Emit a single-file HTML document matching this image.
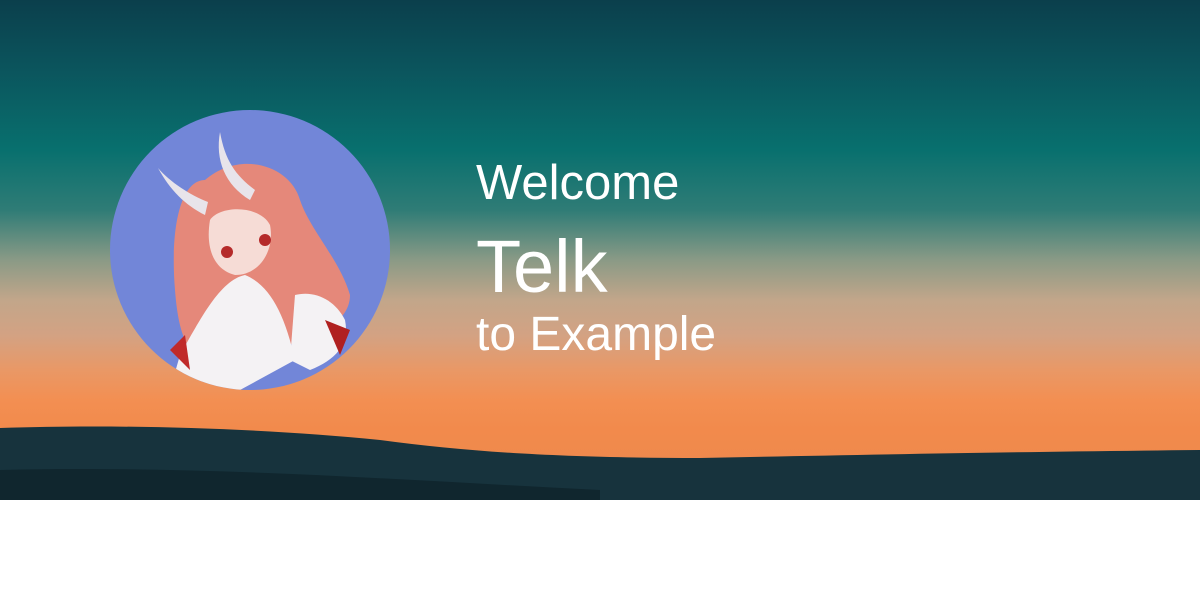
<!DOCTYPE html>
<html><head><meta charset="utf-8"><style>
html,body{margin:0;padding:0;width:1200px;height:600px;overflow:hidden;background:#fff;font-family:"Liberation Sans",sans-serif}
.hero{position:absolute;left:0;top:0;width:1200px;height:500px;overflow:hidden;
background:linear-gradient(180deg,#0b3f4c 0%,#0b555d 14%,#08706e 30%,#2f7c76 42%,#8a9a86 52%,#c2a68a 60%,#d3a283 67%,#e99866 74%,#f38f52 80%,#f28a4c 86%,#e9884e 100%)}
.band{position:absolute;left:0;width:1200px}
.t{position:absolute;left:476px;color:#fff;white-space:nowrap}
</style></head><body>
<div class="hero">
 <svg class="band" style="top:0" width="1200" height="500">
  <path d="M0 428 C120 424 260 428 380 440 C470 452 560 458 700 458 C850 455 1000 452 1200 450 L1200 500 L0 500Z" fill="#17333d"/>
  <path d="M0 470 C200 465 400 480 600 490 L600 500 L0 500Z" fill="#10262e"/>
 </svg>
 <svg style="position:absolute;left:110px;top:110px" width="280" height="280" viewBox="0 0 280 280">
  <defs><clipPath id="c"><circle cx="140" cy="140" r="140"/></clipPath></defs>
  <circle cx="140" cy="140" r="140" fill="#7286d8"/>
  <g clip-path="url(#c)">
   <path d="M95 70 C70 70 60 120 65 180 C68 220 75 230 80 240 L160 240 C200 230 240 215 240 185 C230 150 200 120 190 90 C180 55 130 40 95 70Z" fill="#e5887a"/>
   <path d="M100 110 C110 95 150 95 160 115 C165 140 150 165 125 165 C105 160 95 140 100 110Z" fill="#f6dcd6"/>
   <circle cx="117" cy="142" r="6" fill="#b52a2a"/><circle cx="155" cy="130" r="6" fill="#b52a2a"/>
   <path d="M48 58 C60 80 75 95 95 105 L98 92 C80 85 60 72 48 58Z" fill="#e8e4ea"/>
   <path d="M110 22 C105 50 115 75 140 90 L145 80 C125 65 115 50 110 22Z" fill="#e8e4ea"/>
   <path d="M70 245 C90 210 110 170 135 165 C160 175 175 205 185 250 L130 280 L60 280Z" fill="#f4f2f4"/>
   <path d="M185 185 C205 180 225 190 235 210 C240 235 225 250 200 260 L180 250Z" fill="#f4f2f4"/>
   <path d="M60 240 L75 225 L80 260Z" fill="#c02a2a"/>
   <path d="M215 210 L240 220 L230 245Z" fill="#b02020"/>
  </g>
 </svg>
 <div class="t" style="top:155px;font-size:49px">Welcome</div>
 <div class="t" style="top:224px;font-size:74px">Telk</div>
 <div class="t" style="top:307px;font-size:48px">to Example</div>
</div>
</body></html>
